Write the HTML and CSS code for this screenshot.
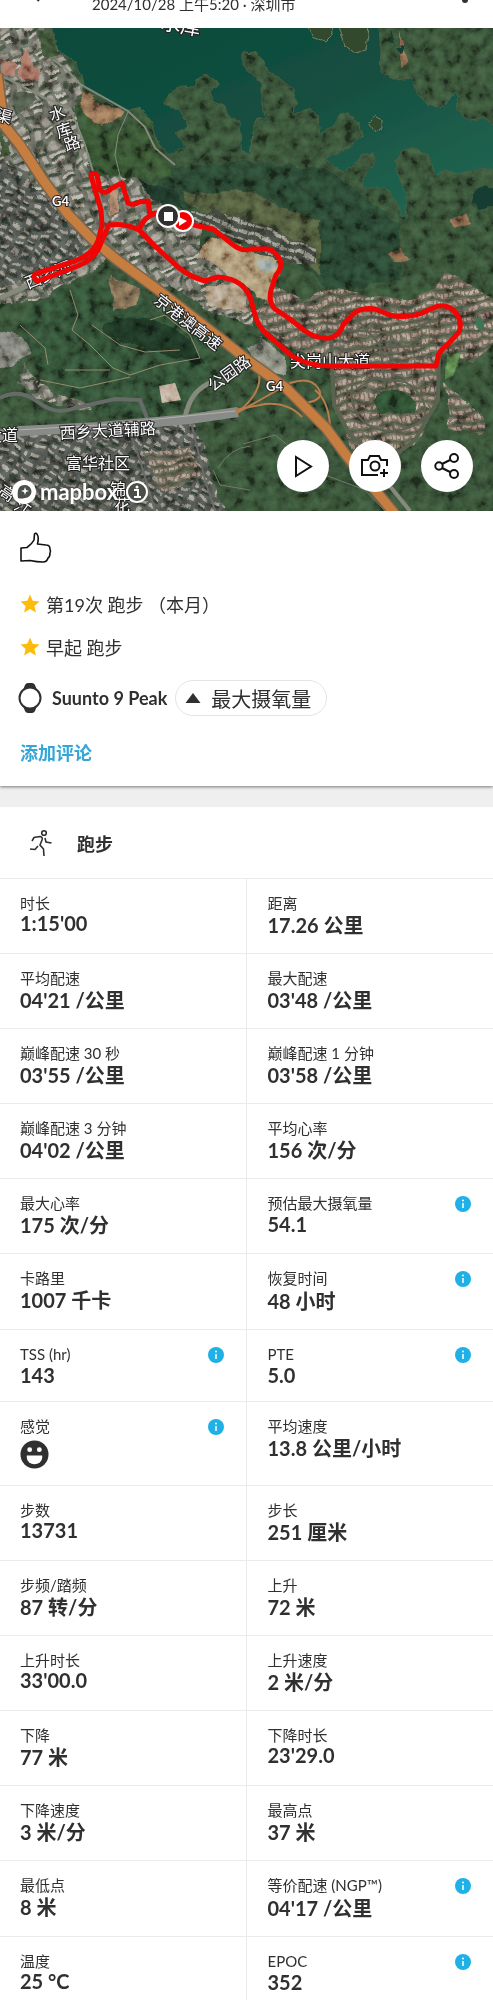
FILE: index.html
```html
<!DOCTYPE html>
<html lang="zh-CN">
<head>
  <meta charset="UTF-8" />
  <meta name="viewport" content="width=device-width, initial-scale=1.0" />
  <title>跑步</title>
  <link rel="stylesheet" href="styles.css">
</head>
<body>

  <header class="top-bar">
    <button class="bar-button" aria-label="返回">
      <svg width="16" height="10" viewBox="0 0 16 10"><path d="M3 -7 L11 1" stroke="#303030" stroke-width="2" /></svg>
    </button>
    <p class="top-date">2024/10/28 上午5:20 · 深圳市</p>
    <button class="bar-button" aria-label="更多">
      <svg width="16" height="10" viewBox="0 0 16 10"><circle cx="8" cy="0" r="3" fill="#303030" /></svg>
    </button>
  </header>

  <section class="map">
    <svg class="map-canvas" viewBox="0 28 493 483" preserveAspectRatio="xMidYMid slice">
      <defs>
        <linearGradient id="water" x1="0" y1="0" x2="1" y2="1">
          <stop offset="0" stop-color="#074a3b" />
          <stop offset=".5" stop-color="#154f40" />
          <stop offset="1" stop-color="#246a54" />
        </linearGradient>
        <pattern id="blocks" width="27" height="25" patternUnits="userSpaceOnUse" patternTransform="rotate(-24)">
          <rect width="27" height="25" fill="#5f6158" />
          <path d="M1 2h10v4H1zM14 1h9v7h-9zM2 10h6v9H2z" fill="#85827a" />
          <path d="M11 11h12v3H11zM12 18h8v3h-8z" fill="#aaa39a" />
          <path d="M1 6h10v3H1zM13 14h11v3H13zM24 1h2v9h-2zM2 20h8v4H2z" fill="#3a4737" />
        </pattern>
        <pattern id="city" width="21" height="17" patternUnits="userSpaceOnUse" patternTransform="rotate(28)">
          <rect width="21" height="17" fill="#4a4e48" />
          <path d="M1 1h7v3H1zM11 2h8v3h-8zM2 10h5v4H2zM11 10h6v3h-6z" fill="#88837b" />
          <path d="M1 5h8v3H1zM12 13h7v3h-7z" fill="#2b352e" />
        </pattern>
        <pattern id="houses" width="10" height="9" patternUnits="userSpaceOnUse" patternTransform="rotate(-8)">
          <rect width="10" height="9" fill="#5c594d" />
          <path d="M1 1h4v3H1zM6 1h3v4H6z" fill="#9a8277" />
          <path d="M0 6h10v2H0z" fill="#444d3e" />
        </pattern>
        <pattern id="terraces" width="9" height="8" patternUnits="userSpaceOnUse" patternTransform="rotate(22)">
          <rect width="9" height="8" fill="#3b4139" />
          <path d="M0 1h8v3H0z" fill="#83827a" />
        </pattern>
        <!-- breaks up the regular building grid and edges -->
        <filter id="rough" x="-5%" y="-5%" width="110%" height="110%">
          <feTurbulence type="fractalNoise" baseFrequency=".05" numOctaves="2" seed="4" />
          <feDisplacementMap in="SourceGraphic" scale="12" xChannelSelector="R" yChannelSelector="G" />
        </filter>
        <filter id="shore" x="-5%" y="-5%" width="110%" height="110%">
          <feTurbulence type="fractalNoise" baseFrequency=".15" numOctaves="2" seed="2" />
          <feDisplacementMap in="SourceGraphic" scale="5" xChannelSelector="R" yChannelSelector="G" />
        </filter>
        <filter id="grain" x="0" y="0" width="1" height="1">
          <feTurbulence type="fractalNoise" baseFrequency=".09" numOctaves="5" seed="8" />
          <feColorMatrix type="matrix" values="1.8 .6 0 0 -.74  1.8 .6 0 0 -.74  1.8 .6 0 0 -.76  0 0 0 0 .4" />
        </filter>
      </defs>

      <!-- ground -->
      <rect y="28" width="493" height="483" fill="#334a33" />
      <g filter="url(#rough)">
        <path d="M163 170L245 160 330 170 400 225 400 280 330 290 240 215 150 200z" fill="#283f2f" />
        <path d="M243 190L320 220 320 275 250 225 200 210 180 195z" fill="#4a5239" />
        <path d="M25 315L75 285 130 290 190 330 215 360 195 400 150 420 80 410 25 350z" fill="#2d4a32" />
        <path d="M105 322Q140 308 190 338L205 365 150 350 105 335z" fill="#1b3222" />
        <path d="M-10 18H52L58 50 75 75 82 90 75 115 91 165 145 178 166 204 200 222 200 255 165 290 110 258 40 300 -10 305z" fill="url(#blocks)" />
        <path d="M-10 155L25 175 85 242 80 260 -10 290z" fill="url(#city)" />
        <path d="M22 65L40 70 38 80 20 76zM26 45L33 68 25 72 20 60zM0 60L18 66 14 78 0 74z" fill="#99685a" />
        <path d="M12 95L35 90 36 100 20 112z" fill="#4b5547" />
        <path d="M38 30L55 32 58 55 48 60 40 45zM0 130L12 150 0 155z" fill="#3b4f35" />
        <path d="M80 85L110 130 150 115 175 178 140 180 100 175 84 150z" fill="#334c2f" />
        <path d="M80 92L124 113 104 127 86 115z" fill="#87674f" />
        <path d="M105 192L116 190 118 212 108 215z" fill="#9a745f" />
        <path d="M138 178L172 192 186 208 150 198z" fill="#1f3026" />
        <path d="M185 209L244 218 315 248 315 262 278 262 245 245 205 226 170 215z" fill="url(#terraces)" />
        <path d="M207 243L225 236 245 250 275 254 278 273 268 305 245 285 215 276 190 262z" fill="#a08a6c" />
        <path d="M145 228L205 262 250 290 252 325 205 310 150 270z" fill="url(#blocks)" />
        <path d="M205 283L243 284 248 310 208 305z" fill="#a6937c" />
        <path d="M258 258L272 260 276 268 262 273z" fill="#84928e" />
        <path d="M108 277L140 288 136 305 116 310z" fill="#776650" />
        <path d="M-10 430L195 420 208 465 225 520 -10 520z" fill="url(#city)" />
        <path d="M143 455L190 445 200 478 160 492z" fill="url(#houses)" />
        <path d="M-10 332L22 338 30 355 -10 372z" fill="#74766f" />
        <path d="M25 362Q42 400 95 402L90 411Q40 408 18 384z" fill="url(#blocks)" />
        <path d="M275 285L302 300 335 288 400 300 435 290 445 270 482 290 500 308 500 340 472 362 440 352 438 400 415 445 385 463 353 447 334 405 331 362 275 340 255 315z" fill="url(#houses)" />
        <path d="M372 400Q390 382 412 400T378 414z" fill="#29472e" />
        <path d="M447 351L460 354 455 375 446 380z" fill="#517445" />
        <path d="M445 383L485 418 482 434 452 430z" fill="url(#houses)" />
        <path d="M247 350L262 338 286 358 285 376 260 370z" fill="#77796f" />
        <path d="M388 255L402 248 408 263 395 262zM450 220L465 212 470 225 455 230zM400 30L408 60 400 72z" fill="#7a5c45" />
      </g>
      <path d="M159 386L175 383 181 400 162 403z" fill="#b8a291" />
      <rect class="map-grain" y="28" width="493" height="483" fill="#fff" filter="url(#grain)" />

      <!-- reservoir -->
      <g filter="url(#shore)">
        <path d="M48 18L58 50 75 62 82 80 84 88 125 111 140 107 152 122 157 140 168 155 187 147 175 133 188 127 180 110 165 104 168 94 180 86 195 87 198 78 208 75 220 84 210 91 213 102 225 106 230 118 240 121 241 150 250 155 254 125 258 118 268 122 262 105 262 82 255 78 243 65 243 53 255 52 264 60 266 70 280 78 292 88 297 103 292 115 310 108 318 115 320 135 335 125 338 115 345 112 358 122 362 135 350 148 326 158 342 173 355 165 362 155 373 153 376 162 365 175 362 188 385 188 396 200 402 216 406 218 407 195 398 175 396 160 403 150 415 148 428 155 436 175 445 170 457 174 480 170 500 168V130L485 118 470 120 458 110 457 90 450 98 440 108 425 103 415 90 412 78 395 80 380 72 381 50 378 18z" fill="url(#water)" stroke="#4f5e44" />
        <path d="M304 18L312 36 325 42 332 35 331 18zM337 18L345 46 355 53 366 50 370 18zM369 123L374 116 382 120 382 128 375 132z" fill="#33492f" stroke="#7d8263" />
        <path d="M390 28L396 48 405 45 402 55 390 40z" fill="#173c35" />
        <path d="M475 190L485 185 498 190 496 205 480 210 472 202z" fill="#173c30" />
        <path d="M475 319L483 317 485 327 477 330z" fill="#3d7457" />
      </g>

      <!-- roads and paths -->
      <g fill="none" stroke="#868a7c" stroke-width="2">
        <path d="M52 59L65 68 80 84 128 111 145 127 155 148 175 165" />
        <path d="M128 112L118 135 115 155 121 180" stroke-width="1" />
        <path d="M0 75L45 98 70 108 85 145 95 178 107 223" />
        <path d="M18 135L45 182 68 212 100 243" />
        <path d="M0 298L33 283 60 268" stroke-width="5" />
        <path d="M185 418Q190 390 212 382" stroke-width="5" />
        <path d="M0 398Q20 388 38 402T75 408L115 399 140 400 147 418" stroke="#666b67" stroke-width="4" />
        <path d="M331 340L334 405 350 435 385 463 415 440 438 400 439 352" stroke="#59634f" stroke-width="4" />
        <path d="M354 375Q345 410 368 425 398 440 425 418 428 395 405 382L375 378 358 388" stroke="#5c6252" />
        <path d="M353 315L380 345 385 385M391 325L390 365M335 330L400 333 435 320M340 350L437 345" stroke="#5c6252" />
        <path d="M125 420L140 460 155 511M190 418L205 480 215 511" stroke="#686c64" />
        <path d="M218 468Q230 448 250 446M213 470L220 485 250 490M243 444L275 435 300 455 325 475 365 490 385 511" stroke="#737b68" stroke-width="1" />
        <path d="M385 480L410 511" stroke-width="4" />
      </g>
      <g fill="none" stroke="#968b6e" stroke-width="1">
        <path d="M70 290L78 315 72 330 90 345 113 368 130 375 160 365 200 358 190 335 165 315 150 320" />
        <path d="M20 325L45 348 48 365M65 370L110 370M40 380L80 388 130 377M92 325L120 345 145 352 180 350" />
      </g>
      <path d="M-5 440L20 431 100 427 190 419 238 412" fill="none" stroke="#898b88" stroke-width="10" />
      <path d="M0 431L100 425 235 411" fill="none" stroke="#b1b2ad" />
      <g fill="none" stroke="#b87d4b" stroke-width="2">
        <path d="M235 414L260 400 290 383Q310 376 318 388T305 403L289 393" />
        <path d="M235 410L265 404Q288 402 302 417M258 370Q265 390 238 412M315 390Q328 400 330 425L338 443" />
      </g>
      <path class="highway-edge" d="M-3 74L4 125 20 145 43 180 67 213 93 240 117 260 157 289 220 338 250 362 286 388 326 428 346 455 395 514" />
      <path class="highway" d="M-3 74L4 125 20 145 43 180 67 213 93 240 117 260 157 289 220 338 250 362 286 388 326 428 346 455 395 514" />

      <!-- place names -->
      <g class="place">
        <text x="160" y="29" font-size="20" transform="rotate(10 160 29)">水库</text>
        <text x="49" y="119" transform="rotate(-18 57 113)">水</text>
        <text x="56" y="136" transform="rotate(-18 64 130)">库</text>
        <text x="64" y="149" transform="rotate(-18 72 143)">路</text>
        <text x="-4" y="122" transform="rotate(15 4 116)">渠</text>
        <text x="28" y="289" transform="rotate(-22 28 289)">西乡河</text>
        <text x="153" y="302" transform="rotate(38 153 302)">京港澳高速</text>
        <text x="213" y="392" transform="rotate(-36 213 392)">公园路</text>
        <text x="290" y="367">尖岗山大道</text>
        <text x="60" y="439" transform="rotate(-3 60 439)">西乡大道辅路</text>
        <text x="-14" y="441">大道</text>
        <text x="66" y="469">富华社区</text>
        <text x="110" y="495">锦</text>
        <text x="114" y="511">花</text>
        <text x="-1" y="499" transform="rotate(35 7 493)">高</text>
        <text x="15" y="514" transform="rotate(35 23 508)">江</text>
        <text class="road-no" x="52" y="206">G4</text>
        <text class="road-no" x="266" y="391">G4</text>
      </g>

      <!-- track -->
      <path class="track" d="M180 221L198 226 213 229Q222 236 232 244T250 249L268 249Q274 250 279 258T276 275L271 290Q268 302 275 309L290 319 305 331Q317 339 328 338T343 325L353 314Q361 307 375 309L390 315Q405 319 422 313L435 307Q447 303 455 312T459 332L449 343Q438 352 438 357L436 366 385 366 330 366Q308 366 292 356L270 337Q258 327 255 315L251 300Q248 290 240 284T218 277L205 281Q190 277 178 267L157 248 139 230Q125 223 109 225L104 236 98 250Q92 260 78 266L38 281Q32 279 35 274L75 261Q93 254 98 241L102 225 101 210 96 193 91 176Q93 171 97 175L100 190Q105 195 112 188L122 183 128 203Q132 206 140 202L148 201 150 214 158 213M139 230Q143 217 156 213" />
      <circle cx="183" cy="221" r="10" fill="#f40000" stroke="#fff" stroke-width="2" />
      <path d="M179 217L187 221 179 226z" fill="#fff" />
      <circle cx="168" cy="216" r="11" fill="#303030" stroke="#fff" stroke-width="2" />
      <rect x="164" y="212" width="9" height="9" fill="#fff" />
    </svg>

    <div class="map-credit">
      <svg width="24" height="24" viewBox="0 0 24 24">
        <circle cx="12" cy="12" r="12" fill="#fff" />
        <path d="M6 18Q4 5 13 5A6 6 0 0 1 13 18Q9 19 6 18z" fill="#4b4f49" />
        <path d="M13 7l1 3 3 1-3 1-1 3-1-3-3-1 3-1z" fill="#fff" />
      </svg>
      <span class="map-brand">mapbox</span>
      <button class="credit-button" aria-label="地图信息">
        <svg width="22" height="22" viewBox="0 0 22 22">
          <circle cx="11" cy="11" r="10" fill="#4b4f49" stroke="#fff" stroke-width="2" />
          <path d="M8 9h4v7M8 16h7" fill="none" stroke="#fff" stroke-width="2" />
          <circle cx="11" cy="6" r="1.5" fill="#fff" />
        </svg>
      </button>
    </div>

    <div class="map-actions">
      <button class="round-button" aria-label="播放">
        <svg width="28" height="28" viewBox="0 0 28 28"><path d="M7 5v19l15-9.500z" /></svg>
      </button>
      <button class="round-button" aria-label="添加照片">
        <svg width="28" height="28" viewBox="0 0 28 28">
          <path d="M17 23H1V8h6l2-4h9l2 4h6v6" />
          <circle cx="14" cy="14" r="4.500" />
          <path d="M23 17v8M19 21h8" />
        </svg>
      </button>
      <button class="round-button" aria-label="分享">
        <svg width="28" height="28" viewBox="0 0 28 28">
          <circle cx="6" cy="14" r="3.700" /><circle cx="21" cy="6" r="4" /><circle cx="21" cy="22" r="4" />
          <path d="M9 12l8-4M9 16l8 4" />
        </svg>
      </button>
    </div>
  </section>

  <section class="summary">
    <button class="like-button" aria-label="点赞">
      <svg width="32" height="32" viewBox="0 0 32 32">
        <path d="M1 30V17L7 16.500Q12 13 14 9L14.500 3Q16 1 17.500 4 19 7 17.500 13L26 14Q30 14 30 18 31 20 30 22 30 26 28 27 27 31 23 31 17 31 10 29.500L1 30z" fill="none" stroke="#111" stroke-width="1.600" stroke-linejoin="round" />
      </svg>
    </button>

    <ul class="badges">
      <li>
        <svg class="star" viewBox="0 0 20 20"><path d="M10 .5l2.700 6.300 6.800.6-5.100 4.500 1.500 6.700L10 15.100l-5.900 3.500 1.500-6.700L.5 7.400l6.800-.6z" /></svg>
        第19次 跑步 （本月）
      </li>
      <li>
        <svg class="star" viewBox="0 0 20 20"><path d="M10 .5l2.700 6.300 6.800.6-5.100 4.500 1.500 6.700L10 15.100l-5.900 3.500 1.500-6.700L.5 7.400l6.800-.6z" /></svg>
        早起 跑步
      </li>
    </ul>

    <div class="device">
      <svg width="24" height="32" viewBox="0 0 24 32">
        <path d="M5 8L7 3Q8 1 10 1h4Q16 1 17 3l2 5v16l-2 5Q16 31 14 31h-4Q8 31 7 29l-2-5z" fill="#303030" />
        <circle cx="12" cy="16" r="10.500" fill="#fff" stroke="#303030" stroke-width="2" />
      </svg>
      <span class="device-name">Suunto 9 Peak</span>
      <button class="tag">
        <svg width="16" height="12" viewBox="0 0 16 12"><path d="M8 1l7.500 10H.5z" fill="#303030" /></svg>
        最大摄氧量
      </button>
    </div>

    <a class="comment-link" href="#">添加评论</a>
  </section>

  <section class="workout">
    <h2 class="workout-title">
      <svg width="26" height="30" viewBox="0 0 26 30">
        <g fill="none" stroke="#303030" stroke-width="1.600">
          <circle cx="16" cy="5" r="2.300" />
          <path d="M4 13L6 9.500 12 8.500Q15 9 14 12L12 17 15.500 21 16 28M2 21L7 21.500 10 18M17 10L18 14 23.500 15" />
        </g>
      </svg>
      跑步
    </h2>
    <dl class="stats" id="stats"></dl>
  </section>

  <script src="script.js"></script>
</body>
</html>
```

FILE: styles.css
```css
body {
  margin: 0;
  background-color: #efefef;
  color: #303030;
  font-family: Lato, "Noto Sans CJK SC", sans-serif;
  font-size: 15px;
}

button {
  padding: 0;
  border: none;
  background: none;
  font-family: inherit;
  color: inherit;
  cursor: pointer;
}

svg {
  display: block;
  flex-shrink: 0;
}

.top-bar {
  display: flex;
  align-items: flex-start;
  height: 28px;
  padding: 0 20px 0 28px;
  background-color: white;
  overflow: hidden;
}

.top-date {
  flex: 1;
  margin: 0 0 0 48px;
  line-height: 8px;
}

.map {
  position: relative;
}

.map-canvas {
  width: 100%;
  height: auto;
}

.map-grain {
  mix-blend-mode: overlay;
}

.highway {
  fill: none;
  stroke: #c67d40;
  stroke-width: 9;
}

.highway-edge {
  fill: none;
  stroke: #78644c;
  stroke-width: 12;
}

.track {
  fill: none;
  stroke: #f00505;
  stroke-width: 5;
  stroke-linejoin: round;
}

.place {
  fill: white;
  stroke: #222;
  stroke-width: 2;
  paint-order: stroke;
  font-size: 16px;
}

.road-no {
  font-size: 13px;
  font-weight: bold;
}

.map-credit {
  position: absolute;
  left: 12px;
  bottom: 7px;
  display: flex;
  align-items: center;
  gap: 4px;
}

.map-brand {
  color: white;
  font-size: 22px;
  font-weight: bold;
  line-height: 24px;
  text-shadow: 0 0 2px #333;
}

.credit-button {
  margin-left: 4px;
}

.map-actions {
  position: absolute;
  right: 20px;
  bottom: 19px;
  display: flex;
  gap: 20px;
}

.round-button {
  display: flex;
  align-items: center;
  justify-content: center;
  width: 52px;
  height: 52px;
  border-radius: 50%;
  background-color: white;
}

.round-button svg {
  fill: none;
  stroke: #111;
  stroke-width: 2;
}

.summary {
  display: flex;
  flex-direction: column;
  align-items: flex-start;
  padding: 20px;
  background-color: white;
  box-shadow: 0 1px 3px rgba(0, 0, 0, 0.5);
}

.badges {
  margin: 19px 0 0;
  padding: 0;
  list-style: none;
  font-size: 18px;
}

.badges li {
  display: flex;
  align-items: center;
  gap: 6px;
  height: 43px;
}

.star {
  width: 20px;
  height: 20px;
  fill: #fdbc0b;
}

.device {
  display: flex;
  align-items: center;
  gap: 8px;
  margin: 12px 0 0 -2px;
}

.device-name {
  margin-left: 2px;
  font-size: 18px;
  font-weight: bold;
}

.tag {
  display: flex;
  align-items: center;
  gap: 10px;
  height: 36px;
  padding: 0 15px 0 9px;
  border: 1px solid #e4e4e4;
  border-radius: 18px;
  font-size: 20px;
}

.comment-link {
  margin-top: 24px;
  color: #34a6d8;
  font-size: 18px;
  font-weight: bold;
  line-height: 26px;
  text-decoration: none;
}

.workout {
  margin-top: 21px;
  background-color: white;
}

.workout-title {
  display: flex;
  align-items: center;
  gap: 23px;
  height: 71px;
  margin: 0;
  padding-left: 28px;
  border-bottom: 1px solid #ebebeb;
  font-size: 18px;
}

.stats {
  display: grid;
  grid-template-columns: 1fr 1fr;
  margin: 0;
}

.stat {
  padding: 14px 22px 16px 21px;
  border-bottom: 1px solid #ebebeb;
}

.stat:nth-child(odd) {
  padding-left: 20px;
  border-right: 1px solid #ebebeb;
}

.stat dt {
  display: flex;
  align-items: center;
  justify-content: space-between;
  line-height: 20px;
}

.stat.has-info dt {
  line-height: 21px;
}

.stat dd {
  margin: 0;
  font-size: 20px;
  font-weight: bold;
  line-height: 24px;
}

.stat.plain dd {
  line-height: 20px;
}

.info-button svg {
  width: 16px;
  height: 16px;
}

.mood {
  width: 29px;
  height: 29px;
  padding-top: 3px;
}
```

FILE: script.js
```js
// [label, value, has info button]
const stats = [
  ["时长", "1:15'00"],
  ["距离", "17.26 公里"],
  ["平均配速", "04'21 /公里"],
  ["最大配速", "03'48 /公里"],
  ["巅峰配速 30 秒", "03'55 /公里"],
  ["巅峰配速 1 分钟", "03'58 /公里"],
  ["巅峰配速 3 分钟", "04'02 /公里"],
  ["平均心率", "156 次/分"],
  ["最大心率", "175 次/分"],
  ["预估最大摄氧量", "54.1", true],
  ["卡路里", "1007 千卡"],
  ["恢复时间", "48 小时", true],
  ["TSS (hr)", "143", true],
  ["PTE", "5.0", true],
  ["感觉", "mood", true],
  ["平均速度", "13.8 公里/小时"],
  ["步数", "13731"],
  ["步长", "251 厘米"],
  ["步频/踏频", "87 转/分"],
  ["上升", "72 米"],
  ["上升时长", "33'00.0"],
  ["上升速度", "2 米/分"],
  ["下降", "77 米"],
  ["下降时长", "23'29.0"],
  ["下降速度", "3 米/分"],
  ["最高点", "37 米"],
  ["最低点", "8 米"],
  ["等价配速 (NGP™)", "04'17 /公里", true],
  ["温度", "25 °C"],
  ["EPOC", "352", true]
];

const infoButton = `
  <button class="info-button" aria-label="说明">
    <svg viewBox="0 0 16 16">
      <circle cx="8" cy="8" r="8" fill="#1fb0e6" />
      <path d="M8 7v5" stroke="#fff" stroke-width="1.500" />
      <circle cx="8" cy="4.500" r="1" fill="#fff" />
    </svg>
  </button>`;

const moodIcon = `
  <svg class="mood" viewBox="0 0 30 30">
    <circle cx="15" cy="15" r="14.500" fill="#303030" />
    <circle cx="10" cy="10" r="2.500" fill="#fff" />
    <circle cx="20" cy="10" r="2.500" fill="#fff" />
    <path d="M7 16h16v2a8 7 0 0 1-16 0z" fill="#fff" />
  </svg>`;

const list = document.getElementById("stats");
stats.forEach(([label, value, info]) => {
  const cell = document.createElement("div");
  cell.className = "stat";
  if (info) cell.classList.add("has-info");
  // values without a Chinese unit sit on a shorter line
  if (!/[\u4e00-\u9fff]/.test(value)) cell.classList.add("plain");
  cell.innerHTML = `<dt>${label}${info ? infoButton : ""}</dt><dd>${value === "mood" ? moodIcon : value}</dd>`;
  list.appendChild(cell);
});
```
